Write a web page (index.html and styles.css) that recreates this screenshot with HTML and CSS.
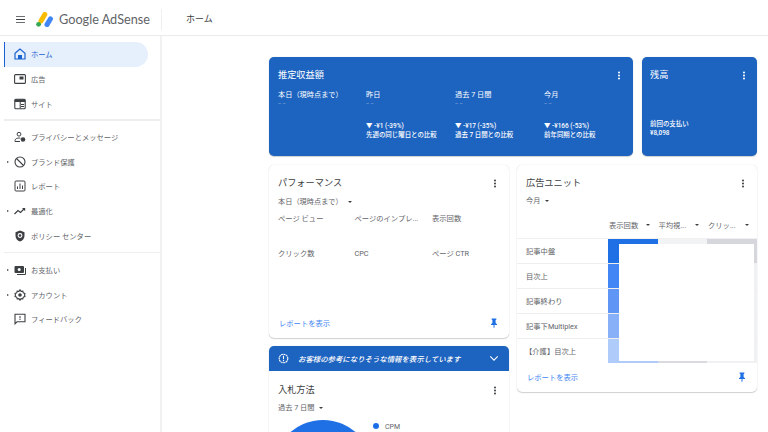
FILE: index.html
```html
<!DOCTYPE html>
<html lang="ja">
<head>
<meta charset="utf-8">
<title>Google AdSense</title>
<link rel="stylesheet" href="styles.css">
</head>
<body>
<header class="topbar">
  <svg class="menu-icon" viewBox="0 0 12 10"><path d="M1 1h10v1H1zM1 4.5h10v1H1zM1 8h10v1H1z" fill="#3c4043"/></svg>
  <svg class="logo" viewBox="0 0 18 15"><path d="M8.800 2.500 5 9" stroke="#fbbc04" stroke-width="5" stroke-linecap="round" fill="none"/><circle cx="2.600" cy="12.300" r="2.400" fill="#34a853"/><path d="M14.500 6.800 11 12.600" stroke="#4285f4" stroke-width="5" stroke-linecap="round" fill="none"/></svg>
  <span class="brand">Google AdSense</span>
  <span class="page-title">ホーム</span>
</header>
<div class="layout">
  <nav class="sidebar">
    <div class="nav-group">
      <a class="nav-item active"><span class="caret"></span><svg class="nav-icon" viewBox="0 0 12 12"><path d="M6 1 1 5.200V11h10V5.200z" fill="none" stroke="#1a62d0" stroke-width="1.200"/><path d="M4 7h4v4H4z" fill="#1a62d0"/></svg><span>ホーム</span></a>
      <a class="nav-item"><span class="caret"></span><svg class="nav-icon" viewBox="0 0 12 12"><rect x=".6" y="1.600" width="10.800" height="8.800" rx="1" fill="none" stroke="#3c4043" stroke-width="1.100"/><rect x="5.500" y="3.500" width="4" height="3" fill="#3c4043"/></svg><span>広告</span></a>
      <a class="nav-item"><span class="caret"></span><svg class="nav-icon" viewBox="0 0 12 12"><rect x=".8" y="1.300" width="10.400" height="9.400" rx="1" fill="none" stroke="#3c4043" stroke-width="1.100"/><path d="M.8 1.300h10.400v2.700H.8zM7 6h3v1H7zM7 8h3v1H7z" fill="#3c4043"/><path d="M6.200 4v6.500" stroke="#3c4043"/></svg><span>サイト</span></a>
    </div>
    <div class="nav-group">
      <a class="nav-item"><span class="caret"></span><svg class="nav-icon" viewBox="0 0 12 12"><circle cx="5" cy="3.200" r="1.900" fill="none" stroke="#3c4043"/><path d="M1 10.500V9.400C1 8 3 7 5 7c.6 0 1 .1 1.400.2" fill="none" stroke="#3c4043"/><path d="M1 10.500h5" stroke="#3c4043"/><circle cx="9" cy="8.500" r="2.300" fill="#3c4043"/></svg><span>プライバシーとメッセージ</span></a>
      <a class="nav-item"><span class="caret shown"></span><svg class="nav-icon" viewBox="0 0 12 12"><circle cx="6" cy="6" r="5" fill="none" stroke="#3c4043" stroke-width="1.100"/><path d="M2.500 2.500 9.500 9.500" stroke="#3c4043" stroke-width="1.100"/></svg><span>ブランド保護</span></a>
      <a class="nav-item"><span class="caret"></span><svg class="nav-icon" viewBox="0 0 12 12"><rect x="1" y="1" width="10" height="10" rx="1" fill="none" stroke="#3c4043"/><path d="M3.500 9V6.500M6 9V3.500M8.500 9V5.500" stroke="#3c4043"/></svg><span>レポート</span></a>
      <a class="nav-item"><span class="caret shown"></span><svg class="nav-icon" viewBox="0 0 12 12"><path d="m.5 9 3.500-3.500 2.500 2L10.500 3.500" fill="none" stroke="#3c4043" stroke-width="1.200"/><path d="M8 3h3.200v3.200z" fill="#3c4043"/></svg><span>最適化</span></a>
      <a class="nav-item"><span class="caret"></span><svg class="nav-icon" viewBox="0 0 12 12"><path d="M6 .5 1.500 2.300v3.500c0 2.800 2 5 4.500 5.700 2.500-.7 4.500-2.900 4.500-5.700V2.300z" fill="#3c4043"/><circle cx="6" cy="5.500" r="1.900" fill="none" stroke="#fff" stroke-width="1.100"/></svg><span>ポリシー センター</span></a>
    </div>
    <div class="nav-group">
      <a class="nav-item"><span class="caret shown"></span><svg class="nav-icon" viewBox="0 0 12 12"><rect x=".5" y="2" width="9.500" height="7" rx="1" fill="#3c4043"/><circle cx="5.200" cy="5.500" r="1.500" fill="#fff"/><path d="M11.500 4v6.500H3" fill="none" stroke="#3c4043"/></svg><span>お支払い</span></a>
      <a class="nav-item"><span class="caret shown"></span><svg class="nav-icon" viewBox="0 0 12 12"><path d="M6 .8 7 2.300l1.800-.2.500 1.700 1.700.7-.5 1.500.5 1.500-1.700.7-.5 1.700L7 9.700 6 11.200 5 9.700l-1.800.2-.5-1.700L1 7.500 1.500 6 1 4.500l1.700-.7.500-1.700L5 2.300z" fill="none" stroke="#3c4043" stroke-width="1.100"/><circle cx="6" cy="6" r="1.800" fill="#3c4043"/></svg><span>アカウント</span></a>
      <a class="nav-item"><span class="caret"></span><svg class="nav-icon" viewBox="0 0 12 12"><path d="M1 1.300h10v7.500H3l-2 2z" fill="none" stroke="#3c4043" stroke-width="1.100"/><path d="M5.500 3h1v2.500h-1zM5.500 6h1v1h-1z" fill="#3c4043"/></svg><span>フィードバック</span></a>
    </div>
  </nav>
  <main class="content">
    <section class="row row-top">
      <article class="card blue earnings">
        <div class="card-head"><h2>推定収益額</h2><svg class="more" viewBox="0 0 4 12"><circle cx="2" cy="2" r="1.350" /><circle cx="2" cy="6" r="1.350" /><circle cx="2" cy="10" r="1.350" /></svg></div>
        <div class="earn-grid">
          <div class="earn-col"><h3>本日（現時点まで）</h3><p class="dash">– –</p></div>
          <div class="earn-col"><h3>昨日</h3><p class="dash">– –</p><p class="delta">▼ -¥1 (-39%)<br>先週の同じ曜日との比較</p></div>
          <div class="earn-col"><h3>過去 7 日間</h3><p class="dash">– –</p><p class="delta">▼ -¥17 (-35%)<br>過去 7 日間との比較</p></div>
          <div class="earn-col"><h3>今月</h3><p class="dash">– –</p><p class="delta">▼ -¥166 (-53%)<br>前年同期との比較</p></div>
        </div>
      </article>
      <article class="card blue balance">
        <div class="card-head"><h2>残高</h2><svg class="more" viewBox="0 0 4 12"><circle cx="2" cy="2" r="1.350" /><circle cx="2" cy="6" r="1.350" /><circle cx="2" cy="10" r="1.350" /></svg></div>
        <p class="delta balance-note">前回の支払い<br>¥8,098</p>
      </article>
    </section>
    <section class="row row-bottom">
      <div class="col">
        <article class="card perf">
          <div class="card-head"><h2>パフォーマンス</h2><svg class="more dark" viewBox="0 0 4 12"><circle cx="2" cy="2" r="1.350" /><circle cx="2" cy="6" r="1.350" /><circle cx="2" cy="10" r="1.350" /></svg></div>
          <div class="select">本日（現時点まで）<i class="arrow"></i></div>
          <div class="metrics">
            <span>ページ ビュー</span><span>ページのインプレ...</span><span>表示回数</span>
            <span>クリック数</span><span>CPC</span><span>ページ CTR</span>
          </div>
          <div class="card-foot"><a class="link">レポートを表示</a><svg class="pin" viewBox="0 0 10 12"><path d="M2 .5h6v1L7 2.200V6l1.800 1.500V8.500H5.600V12h-1.200V8.500H1.200V7.500L3 6V2.200L2 1.500z"/></svg></div>
        </article>
        <article class="card bidding">
          <div class="notice"><svg class="notice-icon" viewBox="0 0 12 12"><circle cx="6" cy="6" r="4.700" fill="none" stroke="#fff" stroke-width="1.200" stroke-dasharray="2.200 .5"/><path d="M5.400 3h1.200v3.800H5.400zM5.400 7.700h1.200v1.200H5.400z" fill="#fff"/></svg><em>お客様の参考になりそうな情報を表示しています</em><svg class="chev" viewBox="0 0 12 8"><path d="m1.500 1.500 4.500 4.500 4.500-4.500" fill="none" stroke="#fff" stroke-width="1.300"/></svg></div>
          <div class="card-head bid-head"><h2>入札方法</h2><svg class="more dark" viewBox="0 0 4 12"><circle cx="2" cy="2" r="1.350" /><circle cx="2" cy="6" r="1.350" /><circle cx="2" cy="10" r="1.350" /></svg></div>
          <div class="select">過去 7 日間<i class="arrow"></i></div>
          <div class="bid-body"><div class="pie"></div><div class="legend"><i class="dot"></i>CPM</div></div>
        </article>
      </div>
      <div class="col">
        <article class="card units">
          <div class="card-head"><h2>広告ユニット</h2><svg class="more dark" viewBox="0 0 4 12"><circle cx="2" cy="2" r="1.350" /><circle cx="2" cy="6" r="1.350" /><circle cx="2" cy="10" r="1.350" /></svg></div>
          <div class="select">今月<i class="arrow"></i></div>
          <div class="table">
            <div class="t-row t-head"><span></span><span class="t-col">表示回数<i class="arrow"></i></span><span class="t-col">平均視...<i class="arrow"></i></span><span class="t-col">クリッ...<i class="arrow"></i></span></div>
            <div class="t-row"><span class="t-label">記事中盤</span><b class="c1 s1"></b><b class="c2"></b><b class="c3"></b></div>
            <div class="t-row"><span class="t-label">目次上</span><b class="c1 s2"></b><b class="c2"></b><b class="c3"></b></div>
            <div class="t-row"><span class="t-label">記事終わり</span><b class="c1 s3"></b><b class="c2"></b><b class="c3"></b></div>
            <div class="t-row"><span class="t-label">記事下Multiplex</span><b class="c1 s4"></b><b class="c2"></b><b class="c3"></b></div>
            <div class="t-row"><span class="t-label indent">【介護】目次上</span><b class="c1 s5"></b><b class="c2"></b><b class="c3"></b></div>
            <div class="mask"></div>
          </div>
          <div class="card-foot"><a class="link">レポートを表示</a><svg class="pin" viewBox="0 0 10 12"><path d="M2 .5h6v1L7 2.200V6l1.800 1.500V8.500H5.600V12h-1.200V8.500H1.200V7.500L3 6V2.200L2 1.500z"/></svg></div>
        </article>
      </div>
    </section>
  </main>
</div>
</body>
</html>
```
FILE: styles.css
```css
* { box-sizing: border-box; }
html, body { margin: 0; height: 432px; overflow: hidden; }
body {
  font-family: Roboto, "Noto Sans CJK JP", sans-serif;
  background: #fff;
  color: #5f6368;
  font-size: 8px;
}
h2, h3, p { margin: 0; font-weight: 400; }

.topbar {
  height: 36px;
  display: flex;
  align-items: center;
  padding: 3px 0 0 15px;
  border-bottom: 1px solid #ebebeb;
}
.menu-icon { width: 11px; height: 9px; margin-right: 10px; }
.logo { width: 18px; height: 15px; margin-right: 5px; }
.brand { font-family: Lato, Roboto, sans-serif; font-size: 12.700px; color: #5f6368; width: 102px; white-space: nowrap; }
.page-title {
  font-size: 9px;
  color: #3c4043;
  border-left: 1.500px solid #efefef;
  height: 21px;
  line-height: 20px;
  padding-left: 24px;
}

.layout { display: flex; height: 396px; }
.sidebar {
  width: 162px;
  flex: none;
  padding-left: 4px;
  padding-top: 6px;
  border-right: 2px solid #f1f1f1;
}
.nav-group { border-bottom: 1px solid #eeeeee; padding-bottom: 4px; margin-bottom: 4px; }
.nav-group:last-child { border-bottom: 0; }
.nav-group:first-child { border-bottom-width: 2px; padding-bottom: 3px; margin-bottom: 3px; }
.nav-item {
  height: 24.800px;
  display: flex;
  align-items: center;
  padding-left: 3px;
  color: #5f6368;
  font-size: 7.300px;
  white-space: nowrap;
}
.nav-item.active {
  width: 144px;
  background: #e6effc;
  border-left: 1px solid #1a62d0;
  border-radius: 0 13px 13px 0;
  color: #1a62d0;
  padding-left: 2px;
}
.caret { width: 6px; flex: none; margin-right: 1px; }
.caret.shown::before {
  content: "";
  display: block;
  border-left: 2px solid #3c4043;
  border-top: 1.500px solid transparent;
  border-bottom: 1.500px solid transparent;
  width: 0;
}
.nav-icon { width: 12px; height: 12px; flex: none; margin-right: 5px; }

.content { flex: 1; padding: 21px 11px 0 107px; min-width: 0; }
.row { display: flex; }
.row-top { gap: 9px; margin-bottom: 9px; }
.row-bottom { gap: 8px; align-items: flex-start; }
.col { width: 240px; flex: none; display: flex; flex-direction: column; gap: 8px; }

.card {
  background: #fff;
  border-radius: 5px;
  box-shadow: 0 0 1px rgba(60,64,67,.25), 0 1px 1px rgba(60,64,67,.22);
  position: relative;
}
.blue { background: #1d63c0; color: #fff; height: 99px; padding: 0 9px; }
.earnings { width: 364px; }
.balance { width: 115px; padding: 0 8px; }
.card-head {
  display: flex;
  justify-content: space-between;
  align-items: flex-start;
  height: 32px;
  padding-top: 12px;
}
.card-head h2 { font-size: 9.200px; line-height: 12px; }
.more { width: 4px; height: 9px; fill: #fff; margin: 1.500px 3px 0 0; }
.more.dark { fill: #3c4043; }
.earn-grid { display: grid; grid-template-columns: 88px 89px 89px 1fr; }
.earn-col { height: 55px; }
.earn-col h3 { font-size: 7.200px; line-height: 11px; }
.dash { font-size: 5px; line-height: 7px; opacity: .55; }
.delta { font-size: 6.450px; line-height: 8.500px; font-weight: 500; }
.earn-col .delta { margin-top: 15px; }
.balance-note { margin-top: 31px; }

.perf { height: 173px; padding: 0 9px; display: flex; flex-direction: column; }
.perf h2, .units h2, .bidding h2 { color: #3c4043; }
.select { font-size: 7.200px; line-height: 10px; color: #5f6368; }
.arrow {
  display: inline-block;
  margin-left: 5px;
  border-top: 2.500px solid #3c4043;
  border-left: 2.500px solid transparent;
  border-right: 2.500px solid transparent;
  vertical-align: 1.500px;
}
.metrics {
  display: grid;
  grid-template-columns: 76.500px 77.500px 1fr;
  grid-auto-rows: 35px;
  margin-top: 7px;
  font-size: 7.300px;
  line-height: 10px;
  color: #5f6368;
}
.card-foot {
  margin-top: auto;
  height: 30px;
  display: flex;
  justify-content: space-between;
  align-items: center;
}
.link { color: #4285f4; font-size: 7.300px; padding-left: 1px; }
.pin { width: 8px; height: 10px; fill: #1f6fe5; margin-right: 2px; }

.bidding { height: 100px; overflow: hidden; }
.notice {
  height: 25px;
  background: #1d63c0;
  color: #fff;
  display: flex;
  align-items: center;
  padding: 0 9px;
  font-size: 7.400px;
}
.notice em { flex: 1; margin-left: 9px; font-weight: 500; }
.notice-icon { width: 11px; height: 11px; flex: none; }
.chev { width: 10px; height: 7px; flex: none; margin-right: 1px; }
.bid-head { padding: 13px 9px 0; }
.bidding .select { padding-left: 9px; }
.bid-body { display: flex; padding: 7px 0 0 4px; }
.pie { width: 100px; height: 100px; border-radius: 50%; background: #1f6fe5; flex: none; }
.legend { color: #5f6368; font-size: 7px; line-height: 8px; margin-top: 3px; }
.dot { display: inline-block; width: 6px; height: 6px; border-radius: 50%; background: #1a6fe8; margin-right: 6px; vertical-align: 0; }

.units { height: 227px; display: flex; flex-direction: column; }
.units .card-head, .units .select, .units .card-foot { padding-left: 9px; padding-right: 9px; }
.table { position: relative; margin-top: 13.500px; }
.t-row {
  display: grid;
  grid-template-columns: 91px 49.500px 49.500px 1fr;
  height: 25px;
  border-top: 1px solid #eeeeee;
}
.t-label { padding-left: 9px; align-self: center; font-size: 7.300px; color: #5f6368; white-space: nowrap; }
.indent { padding-left: 8px; }
.t-head { height: 18px; border-top: 0; font-size: 7.300px; color: #5f6368; }
.t-col { white-space: nowrap; padding: 0 8px 0 1px; display: flex; justify-content: space-between; align-items: center; height: 11px; }
.t-col .arrow { margin-left: 0; vertical-align: 0; }
.c2 { background: #f1f3f4; }
.c3 { background: #f0f1f2; }
.s1 { background: #1f6fe5; }
.s2 { background: #4285f4; }
.s3 { background: #5f96f6; }
.s4 { background: #87b0f8; }
.s5 { background: #aecbfa; }
.t-row:nth-child(2) .c3 { background: #d5d7dd; }
.t-row:nth-child(2) { border-top-color: #f0f0f0; }
.t-row:nth-child(6) .c2 { background: #d8dae0; }
.mask { position: absolute; left: 102px; right: 3px; top: 24.500px; bottom: 1.500px; background: #fff; }
```
